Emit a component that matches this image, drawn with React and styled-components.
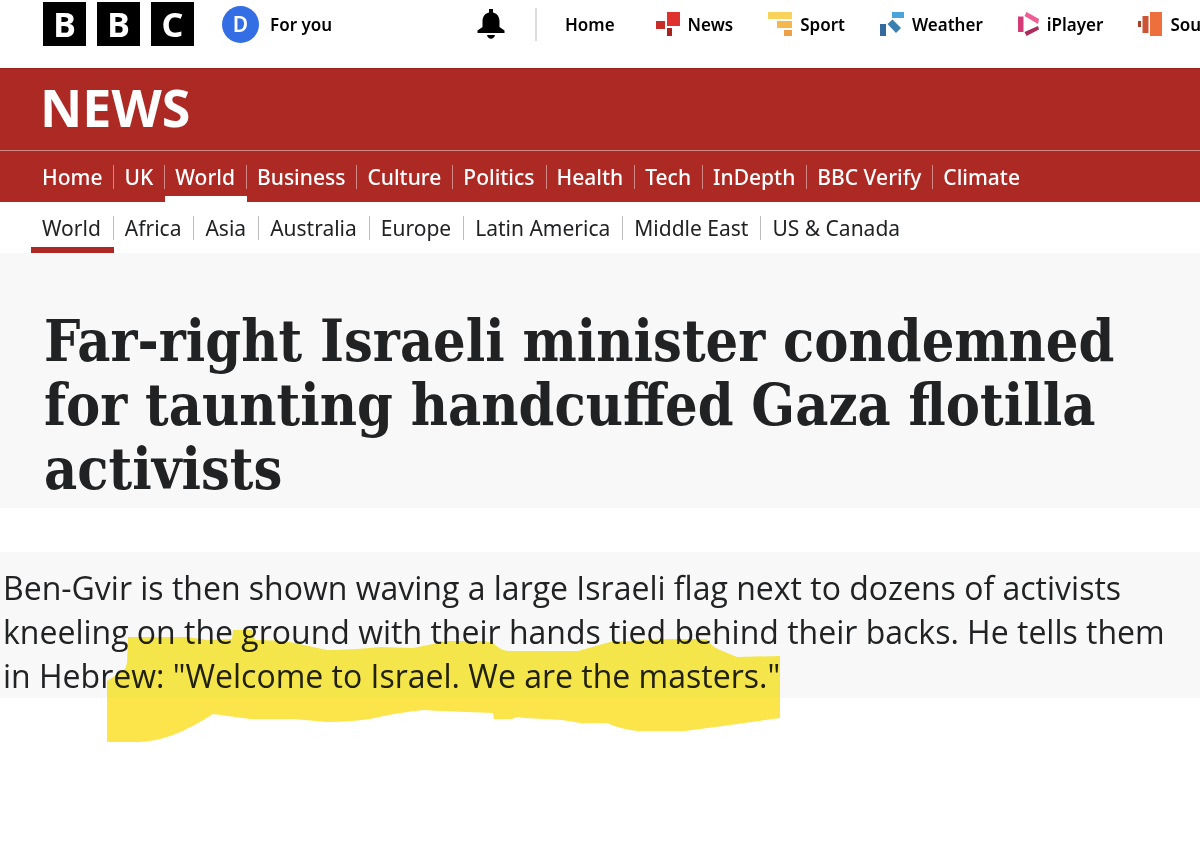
import React from "react";
import styled, { createGlobalStyle } from "styled-components";

const GlobalStyle = createGlobalStyle`
  * { box-sizing: border-box; }
  body {
    margin: 0;
    background: #fff;
    color: #202224;
    font-family: "Noto Sans", "Open Sans", sans-serif;
  }
`;

const TopBar = styled.header`
  display: flex;
  align-items: center;
  height: 68px;
  padding: 0 0 20px 43px;
  overflow: hidden;
  white-space: nowrap;
`;

const Logo = styled.a`
  display: flex;
  gap: 11px;
  flex: none;
  text-decoration: none;
`;

const LogoBlock = styled.span`
  display: flex;
  align-items: center;
  justify-content: center;
  width: 43px;
  height: 44px;
  background: #000;
  color: #fff;
  font-size: 34px;
  line-height: 44px;
  font-weight: 700;
`;

const Account = styled.a`
  display: flex;
  align-items: center;
  flex: none;
  gap: 11px;
  width: 225px;
  margin-left: 28px;
  color: #000;
  font-size: 17px;
  font-weight: 600;
  text-decoration: none;
`;

const Avatar = styled.span`
  display: flex;
  align-items: center;
  justify-content: center;
  width: 37px;
  height: 37px;
  border-radius: 50%;
  background: #346ee4;
  color: #fff;
  font-size: 21px;
`;

const BellButton = styled.button`
  display: flex;
  flex: none;
  align-items: center;
  justify-content: center;
  width: 88px;
  height: 48px;
  padding: 0;
  border: 0;
  background: none;
`;

const TopNav = styled.nav`
  display: flex;
  align-items: center;
  flex: none;
  gap: 35px;
  height: 33px;
  padding-left: 28px;
  border-left: 2px solid #dcdcdc;
`;

const TopLink = styled.a`
  display: flex;
  align-items: center;
  gap: 8px;
  color: #000;
  font-size: 17px;
  font-weight: 600;
  text-decoration: none;
  &:first-child { margin-right: 6px; }
`;

const Masthead = styled.div`
  display: flex;
  align-items: center;
  height: 83px;
  padding: 0 40px 6px;
  border-top: 1px solid #98201d;
  border-bottom: 1px solid #d28986;
  background: #ad2924;
`;

const Brand = styled.a`
  color: #fff;
  font-size: 52px;
  line-height: 64px;
  font-weight: 700;
  text-decoration: none;
`;

const SectionNav = styled.nav`
  display: flex;
  align-items: stretch;
  height: 51px;
  padding-left: ${(p) => (p.$primary ? 32 : 31)}px;
  background: ${(p) => (p.$primary ? "#ad2924" : "#fff")};
  white-space: nowrap;
  overflow: hidden;
`;

const SectionLink = styled.a`
  display: flex;
  align-items: center;
  flex: none;
  padding-top: 6px;
  border-bottom: 6px solid ${(p) => (!p.$active ? "transparent" : p.$primary ? "#fff" : "#ad2924")};
  color: ${(p) => (p.$primary ? "#fff" : "#202224")};
  font-size: 21px;
  font-weight: ${(p) => (p.$primary ? 500 : 400)};
  line-height: 24px;
  text-decoration: none;

  span { padding: ${(p) => (p.$primary ? "0 11px 0 10px" : "0 12px 0 11px")}; }
  &:not(:last-child) span { border-right: 1px solid ${(p) => (p.$primary ? "#d28986" : "#bdbdbd")}; }
`;

const HeadlineBand = styled.section`
  padding: 56px 44px 7px;
  background: #f8f8f8;
`;

const Headline = styled.h1`
  margin: 0;
  font-family: "DejaVu Serif Condensed", "DejaVu Serif", serif;
  font-size: 57px;
  line-height: 64px;
  font-weight: 700;
`;

const Main = styled.main`
  padding-bottom: 64px;
`;

const Excerpt = styled.section`
  position: relative;
  margin-top: 44px;
  padding: 14px 0 0 3px;
  background: #f8f8f8;
`;

const Paragraph = styled.p`
  margin: 0;
  font-family: "Open Sans", "Noto Sans", sans-serif;
  font-size: 32px;
  line-height: 44px;
  white-space: nowrap;
`;

const Marker = styled.svg`
  position: absolute;
  top: 0;
  left: 0;
  mix-blend-mode: multiply;
  pointer-events: none;
`;

const Icon = ({ width = 24, children }) => (
  <svg width={width} height="24" viewBox={`0 0 ${width} 24`} aria-hidden="true">{children}</svg>
);

const NewsIcon = () => (
  <Icon>
    <path fill="#df322d" d="M11 0h13v14H11z" />
    <path fill="#c62c28" d="M0 9h9v8H0z" />
    <path fill="#aa2220" d="M11 16h5v8h-5z" />
  </Icon>
);
const SportIcon = () => (
  <Icon>
    <path fill="#f9d25b" d="M0 0h24v7H0z" />
    <path fill="#f5b84e" d="M9 9h15v7H9z" />
    <path fill="#f0a044" d="M16 18h8v6h-8z" />
  </Icon>
);
const WeatherIcon = () => (
  <Icon>
    <path fill="#4aa3db" d="M12 0h12v6H12z" />
    <path fill="#3b7fb0" d="M12.500 7.500l8.500 8.500-5 5-8.500-9z" />
    <path fill="#336b9f" d="M0 12h6v12H0z" />
  </Icon>
);
const PlayerIcon = () => (
  <Icon width={21}>
    <path fill="#d43a78" d="M0 4.500h5.500v15.500H0z" />
    <path fill="#ee5d94" d="M8.500 0l12.500 7-1 5L6.500 4z" />
    <path fill="#ab2b5d" d="M20 14l1 3.500-12.500 6.500-2-4z" />
  </Icon>
);
const SoundsIcon = () => (
  <Icon>
    <path fill="#a93e27" d="M0 9h3v6H0z" />
    <path fill="#cc5434" d="M4.500 4h6v17h-6z" />
    <path fill="#ed6f3b" d="M12 0h12v24H12z" />
  </Icon>
);

const topLinks = [
  ["Home", null],
  ["News", NewsIcon],
  ["Sport", SportIcon],
  ["Weather", WeatherIcon],
  ["iPlayer", PlayerIcon],
  ["Sounds", SoundsIcon],
];
const sections = ["Home", "UK", "World", "Business", "Culture", "Politics", "Health", "Tech", "InDepth", "BBC Verify", "Climate"];
const regions = ["World", "Africa", "Asia", "Australia", "Europe", "Latin America", "Middle East", "US & Canada"];

const Sections = ({ items, label, primary }) => (
  <SectionNav $primary={primary} aria-label={label}>
    {items.map((name) => (
      <SectionLink key={name} href="#" $primary={primary} $active={name === "World"}>
        <span>{name}</span>
      </SectionLink>
    ))}
  </SectionNav>
);

export default function App() {
  return (
    <>
      <GlobalStyle />
      <TopBar>
        <Logo href="#" aria-label="BBC">
          {["B", "B", "C"].map((letter, i) => <LogoBlock key={i}>{letter}</LogoBlock>)}
        </Logo>
        <Account href="#"><Avatar>D</Avatar>For you</Account>
        <BellButton aria-label="Notifications">
          <svg width="28" height="30" viewBox="0 0 28 30" aria-hidden="true">
            <path d="M12 0h4v3.500c4.500 1 6.500 4.500 6.500 9V18l5 3.500V24H.5v-2.500l5-3.500v-5.500c0-4.500 2-8 6.500-9zM10 26h8c-1 5-7 5-8 0z" />
          </svg>
        </BellButton>
        <TopNav aria-label="BBC">
          {topLinks.map(([name, Glyph]) => (
            <TopLink key={name} href="#">{Glyph && <Glyph />}{name}</TopLink>
          ))}
        </TopNav>
      </TopBar>
      <Masthead><Brand href="#">NEWS</Brand></Masthead>
      <Sections items={sections} label="News sections" primary />
      <Sections items={regions} label="World regions" />
      <Main>
        <HeadlineBand>
          <Headline>
            Far-right Israeli minister condemned<br />
            for taunting handcuffed Gaza flotilla<br />
            activists
          </Headline>
        </HeadlineBand>
        <Excerpt>
          <Paragraph>
            Ben-Gvir is then shown waving a large Israeli flag next to dozens of activists<br />
            kneeling on the ground with their hands tied behind their backs. He tells them<br />
            in Hebrew: "Welcome to Israel. We are the masters."
          </Paragraph>
          <Marker width="781" height="192" viewBox="0 552 781 192" aria-hidden="true">
            <defs>
              <linearGradient id="ink" gradientUnits="userSpaceOnUse" x1="0" y1="552" x2="0" y2="844">
                <stop offset="0.5" stopColor="#fbec4d" />
                <stop offset="0.5" stopColor="#fbe54b" />
              </linearGradient>
            </defs>
            <path
              fill="url(#ink)"
              d="M107 681L125 669L127 663L128 637H187L207 640L232 639L233 630H252L255 640Q275 640 290 642L327 650Q352 650 380 647L413 648L447 641H485L493 643Q500 650 508 651H578L610 642L670 639H707Q712 647 720 650L737 657L780 656V718L723 726L685 731H637Q620 729 607 723H580L562 720L525 718L517 717L512 719H494L493 713L440 711L423 710Q395 713 370 719Q350 722 327 722L293 719H250L213 714Q170 742 138 742H107Z"
            />
          </Marker>
        </Excerpt>
      </Main>
    </>
  );
}
